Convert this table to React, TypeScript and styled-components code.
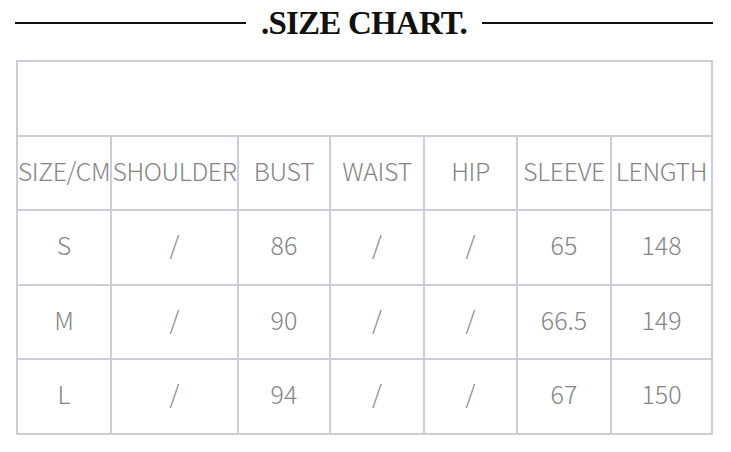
import styled, { createGlobalStyle } from "styled-components";

const GlobalStyle = createGlobalStyle`
  html, body {
    margin: 0;
    padding: 0;
    background: #fff;
  }
`;

const columns = ["SIZE/CM", "SHOULDER", "BUST", "WAIST", "HIP", "SLEEVE", "LENGTH"];
const widths = [94, 127, 92, 94, 93, 94, 101];

const rows = [
  ["S", "/", "86", "/", "/", "65", "148"],
  ["M", "/", "90", "/", "/", "66.5", "149"],
  ["L", "/", "94", "/", "/", "67", "150"],
];

const line = "#cbcdda";

const Page = styled.div`
  width: 731px;
  height: 452px;
  padding-top: 9px;
  box-sizing: border-box;
`;

const TitleBar = styled.div`
  display: flex;
  align-items: center;
  gap: 15px;
  padding: 0 18px 0 15px;
  height: 28px;
`;

const Rule = styled.div`
  flex: 1;
  height: 2px;
  background: #111;
`;

const Title = styled.h1`
  margin: 0;
  font-family: "Liberation Serif", "Times New Roman", serif;
  font-weight: 700;
  font-size: 33px;
  line-height: 28px;
  color: #111;
  letter-spacing: -0.8px;
`;

const Table = styled.div`
  margin: 23px 0 0 16px;
  display: grid;
  grid-template-columns: ${widths.map((w) => `${w}px`).join(" ")};
  grid-auto-rows: 74.5px;
  width: max-content;
  border-top: 2px solid ${line};
  border-left: 2px solid ${line};
`;

const Blank = styled.div`
  grid-column: 1 / -1;
  border-right: 2px solid ${line};
  border-bottom: 2px solid ${line};
  box-sizing: border-box;
`;

const Cell = styled.div<{ $head?: boolean }>`
  display: flex;
  align-items: center;
  justify-content: center;
  box-sizing: border-box;
  padding-bottom: 6px;
  border-right: 2px solid ${line};
  border-bottom: 2px solid ${line};
  font-family: "Noto Sans CJK SC", "Noto Sans", sans-serif;
  font-weight: 300;
  font-size: 25px;
  color: #858585;
  white-space: nowrap;
  letter-spacing: ${(p) => (p.$head ? "-0.4px" : "0")};
`;

export default function App() {
  return (
    <Page>
      <GlobalStyle />
      <TitleBar>
        <Rule />
        <Title>.SIZE CHART.</Title>
        <Rule />
      </TitleBar>
      <Table>
        <Blank />
        {columns.map((c) => (
          <Cell key={c} $head>
            {c}
          </Cell>
        ))}
        {rows.map((r, i) =>
          r.map((v, j) => <Cell key={`${i}-${j}`}>{v}</Cell>)
        )}
      </Table>
    </Page>
  );
}
